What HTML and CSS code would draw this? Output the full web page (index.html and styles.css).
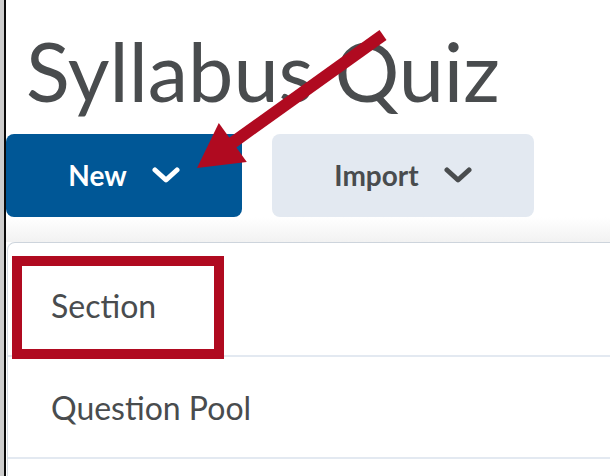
FILE: index.html
```html
<!DOCTYPE html>
<html>
<head>
<meta charset="utf-8">
<link rel="stylesheet" href="styles.css">
</head>
<body>
<div class="frame">
  <div class="gutter"></div>
  <div class="rule"></div>
  <main class="main">
    <h1 class="title">Syllabus Quiz</h1>
    <div class="actions">
      <button class="btn btn-primary">New
        <svg class="chev" viewBox="0 0 28 16" width="28" height="16"><polyline points="3,3 14,13 25,3" /></svg>
      </button>
      <button class="btn btn-secondary">Import
        <svg class="chev" viewBox="0 0 28 16" width="28" height="16"><polyline points="3,3 14,13 25,3" /></svg>
      </button>
    </div>
    <div class="shade"></div>
    <ul class="menu">
      <li class="menu-item">Section</li>
      <li class="menu-item">Question Pool</li>
    </ul>
  </main>
  <div class="highlight"></div>
  <svg class="arrow" width="610" height="476" viewBox="0 0 610 476">
    <line x1="383" y1="35" x2="228" y2="146" />
    <polygon points="197,168 218.8,122.9 246.8,161.9" />
  </svg>
</div>
</body>
</html>
```

FILE: styles.css
```css
* { box-sizing: border-box; }
html, body {
  margin: 0;
  padding: 0;
  background: #fff;
  width: 610px;
  height: 476px;
  overflow: hidden;
}
.frame {
  position: relative;
  display: flex;
  width: 610px;
  height: 476px;
  font-family: Lato, "Noto Sans", sans-serif;
  color: #494c4e;
}
.gutter {
  width: 4px;
  flex: none;
  background: #cdcdcd;
}
.rule {
  width: 2px;
  flex: none;
  background: #0a0a0a;
}
.main {
  flex: 1;
  display: flex;
  flex-direction: column;
  min-width: 0;
}
.title {
  margin: 21px 0 0 20px;
  font-size: 81px;
  font-weight: 400;
  line-height: 100px;
  white-space: nowrap;
  color: #494c4e;
}
.actions {
  display: flex;
  gap: 30px;
  margin-top: 13px;
}
.btn {
  height: 83px;
  border: none;
  border-radius: 8px;
  font-family: Lato, "Noto Sans", sans-serif;
  font-weight: 700;
  font-size: 28px;
  display: flex;
  align-items: center;
  justify-content: center;
  gap: 25px;
  padding: 0 0 2px;
}
.btn-primary {
  width: 236px;
  background: #005796;
  color: #fff;
}
.btn-secondary {
  width: 262px;
  background: #e3e9f1;
  color: #494c4e;
}
.chev {
  flex: none;
  fill: none;
  stroke: currentColor;
  stroke-width: 5;
  stroke-linecap: round;
  stroke-linejoin: round;
}
.shade {
  height: 25px;
  background: linear-gradient(#ffffff, #f2f2f2);
  margin-right: -20px;
}
.menu {
  list-style: none;
  margin: 0 0 0 1px;
  padding: 12px 0 0;
  border-top: 1px solid #cdd4dc;
  border-left: 1px solid #d6dde5;
  border-top-left-radius: 8px;
  background: #fff;
  margin-right: -20px;
  flex: 1;
}
.menu-item {
  height: 102px;
  display: flex;
  align-items: center;
  padding-left: 43px;
  font-size: 32px;
  border-bottom: 2px solid #e3e9f1;
  color: #494c4e;
}
.highlight {
  position: absolute;
  left: 12px;
  top: 256px;
  width: 212px;
  height: 103px;
  border: 10px solid #b00a20;
}
.arrow {
  position: absolute;
  left: 0;
  top: 0;
  pointer-events: none;
}
.arrow line {
  stroke: #b00a20;
  stroke-width: 12;
}
.arrow polygon {
  fill: #b00a20;
}
```
